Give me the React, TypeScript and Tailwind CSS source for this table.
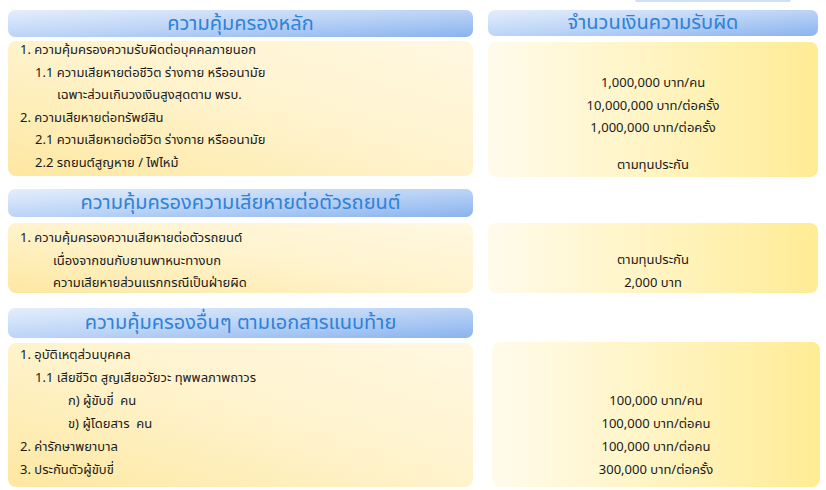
import React from "react";

const font = { fontFamily: '"Noto Sans Thai", "Noto Sans", "Liberation Sans", sans-serif' };

function Header({ children, className = "" }: { children: React.ReactNode; className?: string }) {
  return (
    <div
      className={
        "rounded-[7px] bg-gradient-to-br from-[#e4eefc] via-[#bcd4f6] to-[#8bb3ee] flex items-center justify-center text-[#2f82d6] text-[20px] " +
        className
      }
    >
      {children}
    </div>
  );
}

function LeftBox({ children, className = "" }: { children: React.ReactNode; className?: string }) {
  return (
    <div
      className={
        "rounded-[8px] bg-gradient-to-tr from-[#fde7a0] via-[#fff3cc] to-[#fff8e2] text-[13px] text-[#1a1a1a] leading-[22.6px] " +
        className
      }
    >
      {children}
    </div>
  );
}

function RightBox({ children, className = "" }: { children: React.ReactNode; className?: string }) {
  return (
    <div
      className={
        "rounded-[8px] bg-gradient-to-r from-[#fffbec] to-[#ffec94] text-[13px] text-[#1a1a1a] leading-[22.6px] text-center " +
        className
      }
    >
      {children}
    </div>
  );
}

export default function App() {
  return (
    <div className="w-[826px] h-[490px] bg-white overflow-hidden" style={font}>
      <div className="h-[2px] ml-[635px] w-[156px] bg-[#cfe0f8] rounded-b-[2px]" />
      <div className="pl-[8px] pt-[8px] grid grid-cols-[465px_330px] gap-x-[15px]">
        {/* Section 1 */}
        <Header className="h-[27px]">ความคุ้มครองหลัก</Header>
        <Header className="h-[26px]">จำนวนเงินความรับผิด</Header>
        <LeftBox className="mt-[4px] h-[135px] pl-[12px]">
          <div className="-mt-[2px]">
            <div>1. ความคุ้มครองความรับผิดต่อบุคคลภายนอก</div>
            <div className="pl-[15px]">1.1 ความเสียหายต่อชีวิต ร่างกาย หรืออนามัย</div>
            <div className="pl-[37px]">เฉพาะส่วนเกินวงเงินสูงสุดตาม พรบ.</div>
            <div>2. ความเสียหายต่อทรัพย์สิน</div>
            <div className="pl-[15px]">2.1 ความเสียหายต่อชีวิต ร่างกาย หรืออนามัย</div>
            <div className="pl-[15px]">2.2 รถยนต์สูญหาย / ไฟไหม้</div>
          </div>
        </LeftBox>
        <RightBox className="mt-[5px] h-[135px] pt-[30px]">
          <div>1,000,000 บาท/คน</div>
          <div>10,000,000 บาท/ต่อครั้ง</div>
          <div>1,000,000 บาท/ต่อครั้ง</div>
          <div className="mt-[14px]">ตามทุนประกัน</div>
        </RightBox>

        {/* Section 2 */}
        <Header className="mt-[12px] h-[28px]">ความคุ้มครองความเสียหายต่อตัวรถยนต์</Header>
        <div />
        <LeftBox className="mt-[6px] h-[70px] pl-[12px] pt-[4px]">
          <div>1. ความคุ้มครองความเสียหายต่อตัวรถยนต์</div>
          <div className="pl-[33px]">เนื่องจากชนกับยานพาหนะทางบก</div>
          <div className="pl-[33px]">ความเสียหายส่วนแรกกรณีเป็นฝ่ายผิด</div>
        </LeftBox>
        <RightBox className="mt-[6px] h-[70px] pt-[26px]">
          <div>ตามทุนประกัน</div>
          <div>2,000 บาท</div>
        </RightBox>

        {/* Section 3 */}
        <Header className="mt-[15px] h-[30px]">ความคุ้มครองอื่นๆ ตามเอกสารแนบท้าย</Header>
        <div />
        <LeftBox className="mt-[5px] h-[144px] pl-[12px] pt-[1px] leading-[23px]">
          <div>1. อุบัติเหตุส่วนบุคคล</div>
          <div className="pl-[15px]">1.1 เสียชีวิต สูญเสียอวัยวะ ทุพพลภาพถาวร</div>
          <div className="pl-[48px]">ก) ผู้ขับขี่&nbsp; คน</div>
          <div className="pl-[48px]">ข) ผู้โดยสาร&nbsp; คน</div>
          <div>2. ค่ารักษาพยาบาล</div>
          <div>3. ประกันตัวผู้ขับขี่</div>
        </LeftBox>
        <RightBox className="mt-[4px] ml-[4px] w-[328px] h-[145px] pt-[48px] leading-[23px]">
          <div>100,000 บาท/คน</div>
          <div>100,000 บาท/ต่อคน</div>
          <div>100,000 บาท/ต่อคน</div>
          <div>300,000 บาท/ต่อครั้ง</div>
        </RightBox>
      </div>
    </div>
  );
}
